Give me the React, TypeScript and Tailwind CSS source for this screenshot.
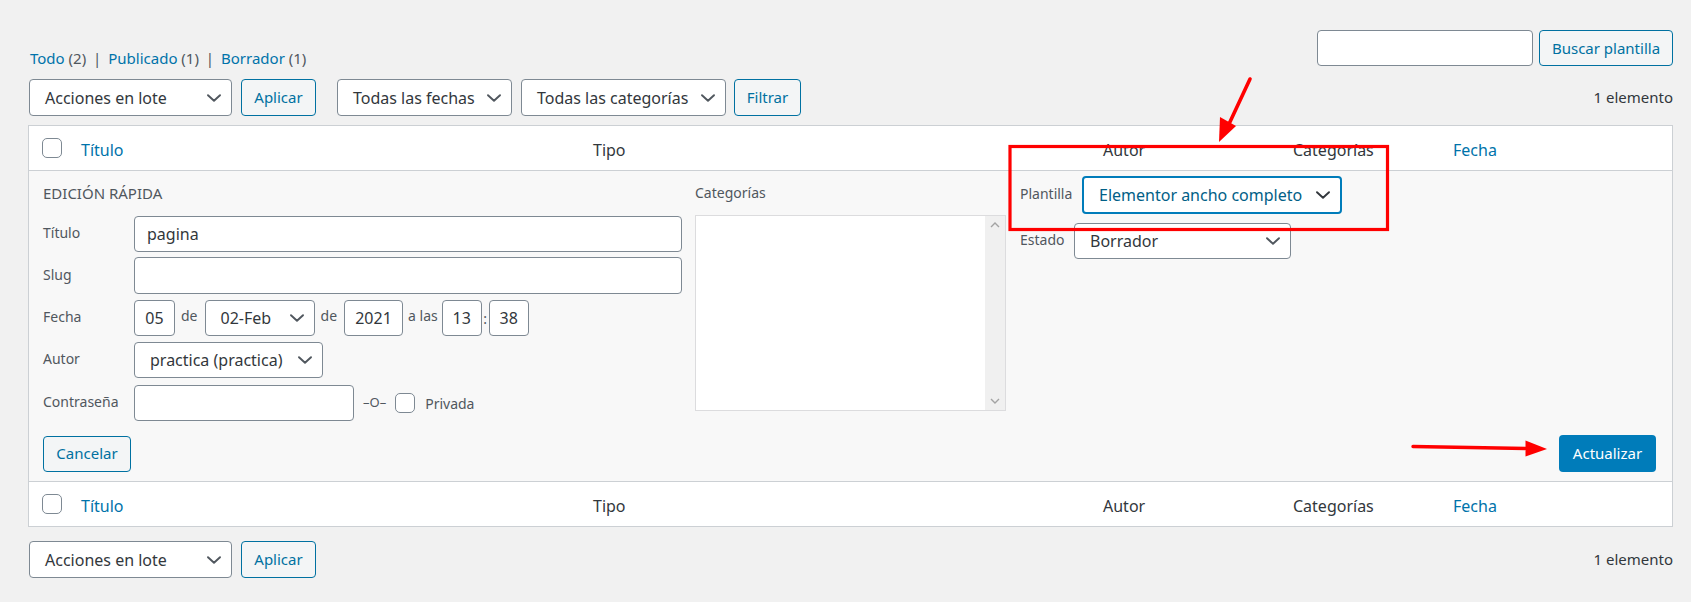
import React from 'react';

const font = "font-['Noto_Sans','Open_Sans',sans-serif]";

function Chevron({ className = '' }: { className?: string }) {
  return (
    <svg width="14" height="8" viewBox="0 0 14 8" className={className} fill="none">
      <path d="M1 1.2 L7 6.8 L13 1.2" stroke="currentColor" strokeWidth="1.9" strokeLinecap="round" strokeLinejoin="round" />
    </svg>
  );
}

function Select({ label, width, className = '', focused = false }: { label: string; width: string; className?: string; focused?: boolean }) {
  return (
    <div
      className={`flex items-center justify-between bg-white rounded-[4px] pl-[15px] pr-[10px] text-[16px] ${width} ${
        focused ? 'border-2 border-[#007cba] text-[#016087]' : 'border border-[#7e8993] text-[#32373c]'
      } ${className}`}
    >
      <span className="whitespace-nowrap">{label}</span>
      <Chevron className={focused ? 'text-[#32373c]' : 'text-[#50575e]'} />
    </div>
  );
}

function SecondaryButton({ label, width, height = 'h-[37px]' }: { label: string; width: string; height?: string }) {
  return (
    <button className={`flex items-center justify-center rounded-[4px] border border-[#0071a1] bg-[#f3f5f6] text-[#0071a1] text-[15px] ${width} ${height}`}>
      {label}
    </button>
  );
}

function Checkbox() {
  return <div className="w-[20px] h-[20px] rounded-[5px] border border-[#7e8993] bg-white" />;
}

function Box({ text, width }: { text?: string; width: string }) {
  return (
    <div className={`h-[36px] flex items-center justify-center bg-white border border-[#7e8993] rounded-[4px] text-[16px] text-[#32373c] ${width}`}>
      {text}
    </div>
  );
}

function ColumnsRow({ border }: { border: string }) {
  return (
    <div className={`flex items-center h-[45px] text-[16px] ${border}`}>
      <div className="w-[52px] pl-[13px]">
        <Checkbox />
      </div>
      <div className="w-[512px] text-[#0073aa] pt-[4px]">Título</div>
      <div className="w-[510px] text-[#32373c] pt-[4px]">Tipo</div>
      <div className="w-[190px] text-[#32373c] pt-[4px]">Autor</div>
      <div className="w-[160px] text-[#32373c] pt-[4px]">Categorías</div>
      <div className="flex-1 text-[#0073aa] pt-[4px]">Fecha</div>
    </div>
  );
}

function FieldRow({ label, children, className = '' }: { label: string; children: React.ReactNode; className?: string }) {
  return (
    <div className={`flex items-center ${className}`}>
      <span className="w-[91px] text-[14px] text-[#50575e] -mt-[3px]">{label}</span>
      {children}
    </div>
  );
}

export default function App() {
  return (
    <div className={`relative min-h-[602px] bg-[#f1f1f1] pl-[28px] pr-[18px] pt-[30px] ${font}`}>
      <div className="flex justify-between items-end">
        <div className="text-[15px] leading-[20px] mb-[-2px] pl-[2px] text-[#50575e]">
          <span className="text-[#0073aa]">Todo</span> (2) <span className="mx-[3px]">|</span>{' '}
          <span className="text-[#0073aa]">Publicado</span> (1) <span className="mx-[3px]">|</span>{' '}
          <span className="text-[#0073aa]">Borrador</span> (1)
        </div>
        <div className="flex gap-[6px]">
          <div className="w-[216px] h-[36px] bg-white border border-[#7e8993] rounded-[4px]" />
          <SecondaryButton label="Buscar plantilla" width="w-[134px]" height="h-[36px]" />
        </div>
      </div>

      <div className="mt-[13px] flex items-center h-[37px] pl-[1px]">
        <Select label="Acciones en lote" width="w-[203px] h-[37px]" />
        <div className="ml-[9px]">
          <SecondaryButton label="Aplicar" width="w-[75px]" />
        </div>
        <Select label="Todas las fechas" width="w-[175px] h-[37px]" className="ml-[21px]" />
        <Select label="Todas las categorías" width="w-[205px] h-[37px]" className="ml-[9px]" />
        <div className="ml-[8px]">
          <SecondaryButton label="Filtrar" width="w-[67px]" />
        </div>
        <span className="ml-auto text-[15px] text-[#32373c]">1 elemento</span>
      </div>

      <div className="mt-[9px] bg-white border border-[#ccd0d4]">
        <ColumnsRow border="border-b border-[#ccd0d4]" />

        <div className="bg-[#f8f8f8] pl-[14px] pr-[16px] pt-[12px] pb-[9px]">
          <div className="flex">
            <div className="w-[639px]">
              <div className="text-[15px] leading-[20px] text-[#50575e] uppercase">Edición rápida</div>
              <FieldRow label="Título" className="mt-[13px]">
                <div className="flex-1 h-[36px] bg-white border border-[#7e8993] rounded-[4px] px-[12px] flex items-center text-[16px] text-[#32373c]">
                  pagina
                </div>
              </FieldRow>
              <FieldRow label="Slug" className="mt-[5px]">
                <div className="flex-1 h-[37px] bg-white border border-[#7e8993] rounded-[4px]" />
              </FieldRow>
              <FieldRow label="Fecha" className="mt-[6px]">
                <Box text="05" width="w-[41px]" />
                <span className="ml-[6px] mr-[7px] text-[14px] text-[#50575e] -mt-[5px]">de</span>
                <Select label="02-Feb" width="w-[110px] h-[36px]" />
                <span className="ml-[6px] mr-[7px] text-[14px] text-[#50575e] -mt-[5px]">de</span>
                <Box text="2021" width="w-[59px]" />
                <span className="ml-[5px] mr-[4px] text-[14px] text-[#50575e] -mt-[5px]">a las</span>
                <Box text="13" width="w-[40px]" />
                <span className="w-[7px] text-center text-[14px] text-[#50575e]">:</span>
                <Box text="38" width="w-[40px]" />
              </FieldRow>
              <FieldRow label="Autor" className="mt-[6px]">
                <Select label="practica (practica)" width="w-[189px] h-[36px]" />
              </FieldRow>
              <FieldRow label="Contraseña" className="mt-[7px]">
                <div className="w-[220px] h-[36px] bg-white border border-[#7e8993] rounded-[4px]" />
                <span className="ml-[9px] text-[13px] text-[#50575e]">–O–</span>
                <div className="ml-[9px]">
                  <Checkbox />
                </div>
                <span className="ml-[10px] text-[14px] text-[#50575e]">Privada</span>
              </FieldRow>
            </div>

            <div className="ml-[13px] w-[311px]">
              <div className="text-[14px] leading-[20px] text-[#50575e]">Categorías</div>
              <div className="mt-[12px] h-[196px] flex bg-white border border-[#dcdcde]">
                <div className="flex-1" />
                <div className="w-[20px] bg-[#f0f0f0] flex flex-col justify-between items-center py-[6px] text-[#a3a3a3]">
                  <svg width="10" height="6" viewBox="0 0 10 6" fill="none">
                    <path d="M1 5 L5 1 L9 5" stroke="currentColor" strokeWidth="1.4" />
                  </svg>
                  <svg width="10" height="6" viewBox="0 0 10 6" fill="none">
                    <path d="M1 1 L5 5 L9 1" stroke="currentColor" strokeWidth="1.4" />
                  </svg>
                </div>
              </div>
            </div>

            <div className="ml-[14px] -mt-[7px]">
              <div className="flex items-center">
                <span className="w-[62px] text-[14px] text-[#50575e] -mt-[4px]">Plantilla</span>
                <Select label="Elementor ancho completo" width="w-[260px] h-[38px]" focused />
              </div>
              <div className="flex items-center mt-[9px]">
                <span className="w-[54px] text-[14px] text-[#50575e] -mt-[3px]">Estado</span>
                <Select label="Borrador" width="w-[217px] h-[36px]" />
              </div>
            </div>
          </div>

          <div className="mt-[14px] flex justify-between items-center">
            <SecondaryButton label="Cancelar" width="w-[88px]" height="h-[36px]" />
            <button className="w-[97px] h-[37px] rounded-[4px] bg-[#007cba] text-white text-[15px]">Actualizar</button>
          </div>
        </div>

        <ColumnsRow border="border-t border-[#ccd0d4]" />
      </div>

      <div className="mt-[14px] flex items-center h-[37px] pl-[1px]">
        <Select label="Acciones en lote" width="w-[203px] h-[37px]" />
        <div className="ml-[9px]">
          <SecondaryButton label="Aplicar" width="w-[75px]" />
        </div>
        <span className="ml-auto text-[15px] text-[#32373c]">1 elemento</span>
      </div>

      <svg className="absolute inset-0 pointer-events-none" width="1691" height="602" viewBox="0 0 1691 602">
        <rect x="1010" y="146.5" width="377.5" height="83" fill="none" stroke="#ff0000" strokeWidth="3.2" />
        <line x1="1250" y1="79" x2="1229" y2="124" stroke="#ff0000" strokeWidth="3.6" strokeLinecap="round" />
        <polygon points="1219,142 1220,117 1236,126" fill="#ff0000" />
        <line x1="1413" y1="446.5" x2="1530" y2="448.5" stroke="#ff0000" strokeWidth="3.4" strokeLinecap="round" />
        <polygon points="1547,449 1525.5,440.5 1525.5,456.5" fill="#ff0000" />
      </svg>
    </div>
  );
}
